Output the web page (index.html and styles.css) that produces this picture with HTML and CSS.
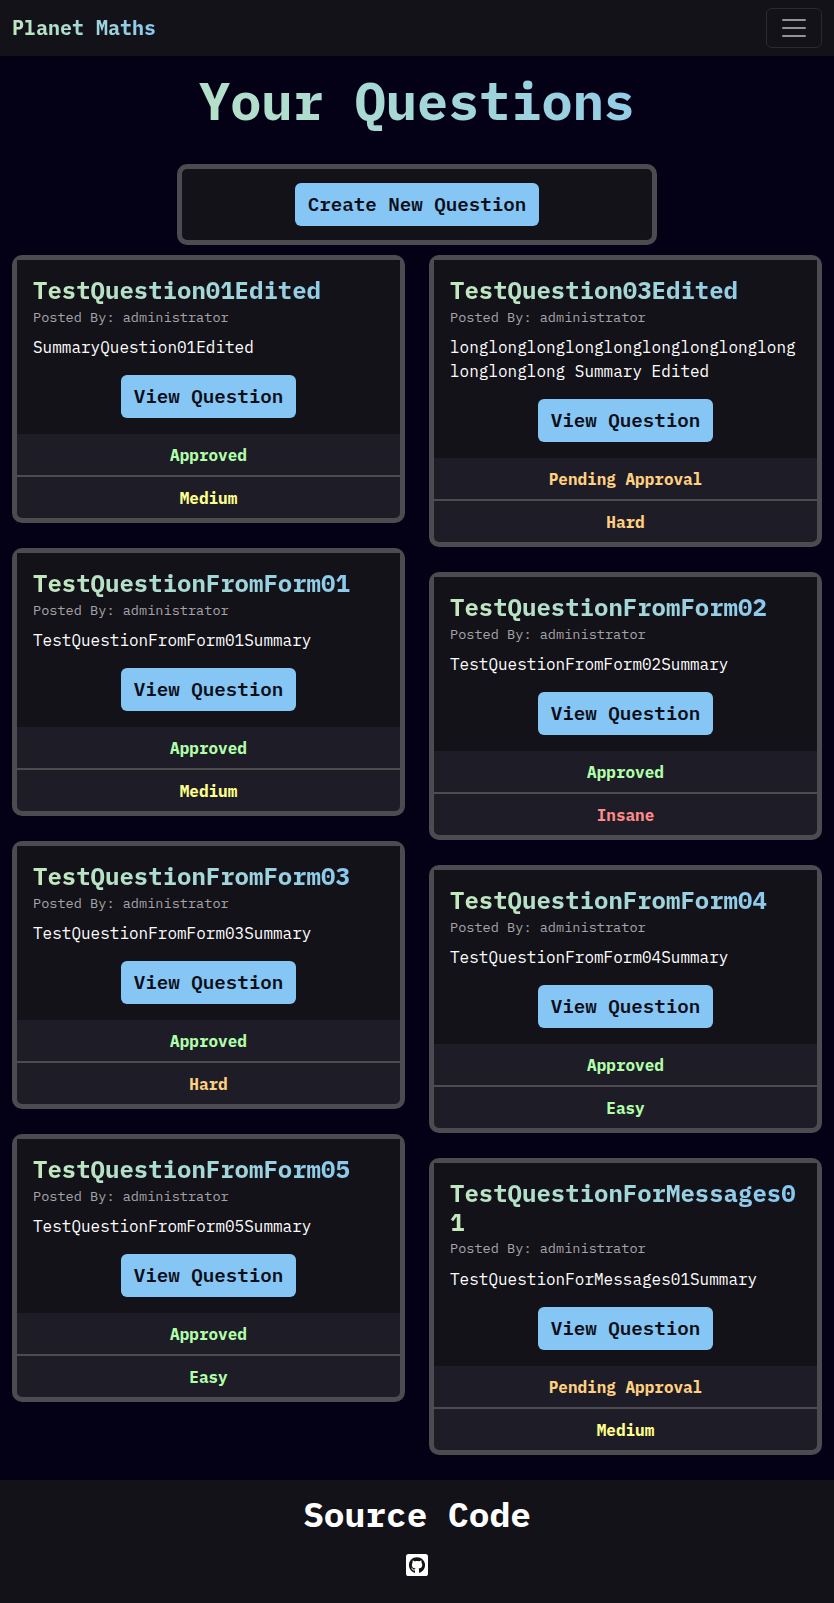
FILE: index.html
```html
<!DOCTYPE html>
<html lang="en">
<head>
<meta charset="utf-8">
<title>Planet Maths</title>
<link rel="stylesheet" href="styles.css">
</head>
<body>
<nav class="navbar">
  <a class="brand gradient">Planet Maths</a>
  <button class="toggler" aria-label="Toggle navigation"><svg viewBox="0 0 30 30" width="30" height="30"><path d="M4 7h22M4 15h22M4 23h22" stroke="currentColor" stroke-width="2" stroke-linecap="round"/></svg></button>
</nav>
<main>
  <h1 class="page-title gradient">Your Questions</h1>
  <div class="create"><a class="btn">Create New Question</a></div>
  <div class="columns">
    <div class="column">
      <article class="card">
        <div class="card-body"><h2 class="gradient">TestQuestion01Edited</h2><p class="author">Posted By: administrator</p><p class="summary">SummaryQuestion01Edited</p><a class="btn">View Question</a></div>
        <ul><li class="green">Approved</li><li class="yellow">Medium</li></ul>
      </article>
      <article class="card">
        <div class="card-body"><h2 class="gradient">TestQuestionFromForm01</h2><p class="author">Posted By: administrator</p><p class="summary">TestQuestionFromForm01Summary</p><a class="btn">View Question</a></div>
        <ul><li class="green">Approved</li><li class="yellow">Medium</li></ul>
      </article>
      <article class="card">
        <div class="card-body"><h2 class="gradient">TestQuestionFromForm03</h2><p class="author">Posted By: administrator</p><p class="summary">TestQuestionFromForm03Summary</p><a class="btn">View Question</a></div>
        <ul><li class="green">Approved</li><li class="orange">Hard</li></ul>
      </article>
      <article class="card">
        <div class="card-body"><h2 class="gradient">TestQuestionFromForm05</h2><p class="author">Posted By: administrator</p><p class="summary">TestQuestionFromForm05Summary</p><a class="btn">View Question</a></div>
        <ul><li class="green">Approved</li><li class="green">Easy</li></ul>
      </article>
    </div>
    <div class="column">
      <article class="card">
        <div class="card-body"><h2 class="gradient">TestQuestion03Edited</h2><p class="author">Posted By: administrator</p><p class="summary">longlonglonglonglonglonglonglonglonglonglonglong Summary Edited</p><a class="btn">View Question</a></div>
        <ul><li class="orange">Pending Approval</li><li class="orange">Hard</li></ul>
      </article>
      <article class="card">
        <div class="card-body"><h2 class="gradient">TestQuestionFromForm02</h2><p class="author">Posted By: administrator</p><p class="summary">TestQuestionFromForm02Summary</p><a class="btn">View Question</a></div>
        <ul><li class="green">Approved</li><li class="red">Insane</li></ul>
      </article>
      <article class="card">
        <div class="card-body"><h2 class="gradient">TestQuestionFromForm04</h2><p class="author">Posted By: administrator</p><p class="summary">TestQuestionFromForm04Summary</p><a class="btn">View Question</a></div>
        <ul><li class="green">Approved</li><li class="green">Easy</li></ul>
      </article>
      <article class="card">
        <div class="card-body"><h2 class="gradient">TestQuestionForMessages01</h2><p class="author">Posted By: administrator</p><p class="summary">TestQuestionForMessages01Summary</p><a class="btn">View Question</a></div>
        <ul><li class="orange">Pending Approval</li><li class="yellow">Medium</li></ul>
      </article>
    </div>
  </div>
</main>
<footer>
  <h2>Source Code</h2>
  <svg class="github" viewBox="0 32 448 448" width="22" height="22"><path fill="currentColor" fill-rule="evenodd" d="M400 32H48C21.5 32 0 53.5 0 80v352c0 26.5 21.5 48 48 48h352c26.5 0 48-21.5 48-48V80c0-26.5-21.5-48-48-48zM265.8 407.7c0-1.8 0-6 .1-11.6c.1-11.4 .1-28.8 .1-43.7c0-15.6-5.2-25.5-11.3-30.7c37-4.1 76-9.2 76-73.1c0-18.2-6.5-27.3-17.1-39c1.7-4.3 7.4-22-1.7-45c-13.9-4.3-45.7 17.9-45.7 17.9c-13.2-3.7-27.5-5.6-41.6-5.6s-28.4 1.9-41.6 5.6c0 0-31.8-22.2-45.7-17.9c-9.1 22.9-3.5 40.6-1.7 45c-10.6 11.7-15.6 20.8-15.6 39c0 63.6 37.3 69 74.3 73.1c-4.8 4.3-9.1 11.7-10.6 22.3c-9.5 4.3-33.8 11.7-48.3-13.9c-9.1-15.8-25.5-17.1-25.5-17.1c-16.2-.2-1.1 10.2-1.1 10.2c10.8 5 18.4 24.2 18.4 24.2c9.7 29.7 56.1 19.7 56.1 19.7c0 9 .1 21.7 .1 30.6c0 4.8 .1 8.6 .1 10c0 4.3-3 9.5-11.5 8C106 393.6 59.8 330.8 59.8 257.4c0-91.8 70.2-161.5 162-161.5s166.2 69.7 166.2 161.5c.1 73.4-44.7 136.3-110.7 158.3c-8.4 1.5-11.5-3.7-11.5-8z"/></svg>
</footer>
</body>
</html>
```
FILE: styles.css
```css
* { box-sizing: border-box; }
body {
  margin: 0;
  min-height: 1603px;
  display: flex;
  flex-direction: column;
  background: #040015;
  color: #fff;
  font: 16px/24px "IBM Plex Mono", "Liberation Mono", monospace;
}
h1, h2, p, ul { margin: 0; padding: 0; }
.gradient {
  background: linear-gradient(45deg, #c6eab9, #82c4f5);
  -webkit-background-clip: text;
  background-clip: text;
  color: transparent;
}
.navbar {
  height: 56px;
  padding: 0 12px;
  display: flex;
  align-items: center;
  justify-content: space-between;
  background: #131218;
}
.brand { font-size: 20px; font-weight: 700; line-height: 30px; }
.toggler {
  width: 56px;
  height: 40px;
  padding: 0;
  display: flex;
  align-items: center;
  justify-content: center;
  background: none;
  border: 1px solid #2b2a2f;
  border-radius: 6px;
  color: #949396;
}
main { padding: 14px 12px 0; }
.page-title {
  font-size: 51.92px;
  font-weight: 700;
  line-height: 62px;
  text-align: center;
}
.create {
  width: 480px;
  height: 81px;
  margin: 32px auto 10px;
  display: flex;
  align-items: center;
  justify-content: center;
  background: #131218;
  border: 5px solid #4d4b50;
  border-radius: 10px;
}
.btn {
  height: 43px;
  padding: 0 12.5px;
  border-radius: 6px;
  background: #86c6f4;
  color: #0b0e18;
  font-size: 19.2px;
  font-weight: 600;
  line-height: 41px;
}
.columns { display: grid; grid-template-columns: 393px 393px; gap: 24px; }
.column { display: flex; flex-direction: column; gap: 25px; }
.card {
  background: #1e1c26;
  border: 5px solid #4d4b50;
  border-radius: 10px;
}
.card-body {
  padding: 16px;
  display: flex;
  flex-direction: column;
  background: #131218;
}
.card-body h2 {
  font-size: 24px;
  font-weight: 700;
  line-height: 28.8px;
  overflow-wrap: anywhere;
}
.author { padding-top: 1.8px; margin-bottom: 8px; color: #a5a4a8; font-size: 13.6px; line-height: 20.4px; }
.summary { margin-bottom: 16px; overflow-wrap: anywhere; }
.card .btn { align-self: center; }
.card ul { list-style: none; text-align: center; font-weight: 700; }
.card li { height: 41px; line-height: 43px; }
.card li + li { height: 43px; border-top: 2px solid #4d4b50; }
.green { color: #b0ffa8; }
.yellow { color: #ffff8c; }
.orange { color: #ffd080; }
.red { color: #ff8a8a; }
footer {
  flex: 1;
  margin-top: 25px;
  padding-top: 13px;
  display: flex;
  flex-direction: column;
  align-items: center;
  background: #131218;
}
footer h2 { font-size: 34.5px; line-height: 42px; }
.github { margin-top: 19px; }
```
